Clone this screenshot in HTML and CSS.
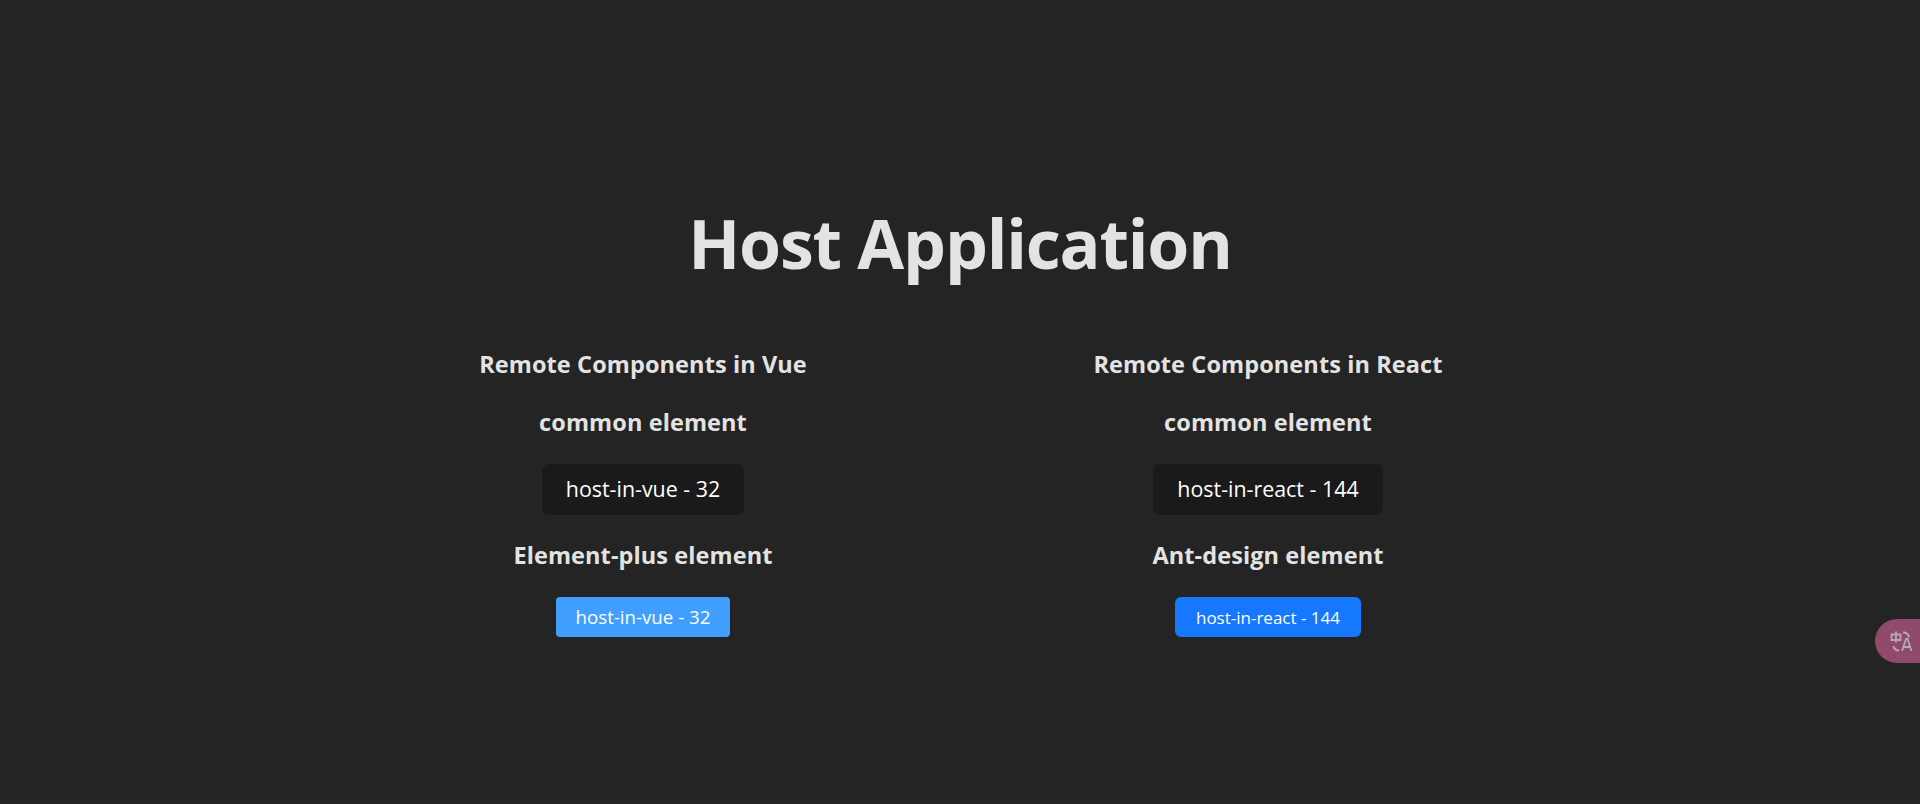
FILE: index.html
```html
<!DOCTYPE html>
<html lang="en">
<head>
<meta charset="utf-8">
<title>Host Application</title>
<link rel="stylesheet" href="styles.css">
</head>
<body>
<main class="app">
  <h1 class="title">Host Application</h1>
  <div class="columns">
    <section class="column">
      <h2 class="heading">Remote Components in Vue</h2>
      <h2 class="heading">common element</h2>
      <button class="btn-common btn-vue">host-in-vue - 32</button>
      <h2 class="heading">Element-plus element</h2>
      <button class="btn-lib btn-element">host-in-vue - 32</button>
    </section>
    <section class="column">
      <h2 class="heading">Remote Components in React</h2>
      <h2 class="heading">common element</h2>
      <button class="btn-common btn-react">host-in-react - 144</button>
      <h2 class="heading">Ant-design element</h2>
      <button class="btn-lib btn-ant">host-in-react - 144</button>
    </section>
  </div>
</main>
<div class="translate-pill">
  <svg class="translate-icon" viewBox="0 0 24 24" width="24" height="24" fill="none" stroke="#b8a9b2" stroke-width="1.8">
    <path d="M1.500 5.500h9v5.500h-9zM6 2.500v11"/>
    <path d="M13 3.500c3 0 5.500 1.500 6 5M9 21.500c-3 0-5-1.500-5.500-4.500"/>
    <path d="M12 22l4-12h1.500l4 12M14 18h6"/>
  </svg>
</div>
</body>
</html>
```

FILE: styles.css
```css
* { box-sizing: border-box; }
html, body { margin: 0; height: 100%; }
body {
  background: #242424;
  color: #e3e3e3;
  font-family: "Open Sans", "Noto Sans", sans-serif;
  overflow: hidden;
}
.app { padding-top: 198px; text-align: center; }
.title {
  margin: 0 0 60px;
  font-size: 68px;
  letter-spacing: -1.2px;
  line-height: 90px;
  font-weight: 700;
}
.columns {
  display: grid;
  grid-template-columns: 625px 625px;
  justify-content: center;
  padding-right: 9px;
}
.column { display: flex; flex-direction: column; align-items: center; }
.heading {
  margin: 0;
  font-size: 23.5px;
  letter-spacing: 0.1px;
  line-height: 32px;
  font-weight: 700;
}
.heading + .heading { margin-top: 26px; }
.btn-common {
  margin: 26px 0 24px;
  height: 51px;
  padding: 0 24px 2px;
  border: 0;
  border-radius: 8px;
  background: #1a1a1a;
  color: #fff;
  font: 400 21.400px "Open Sans", sans-serif;
}
.btn-lib {
  margin-top: 26px;
  height: 40px;
  padding: 0 19.500px 2px;
  border: 0;
  color: #fff;
  font: 400 18.700px "Open Sans", sans-serif;
}
.btn-element { background: #409eff; border-radius: 4px; }
.btn-ant { background: #1677ff; border-radius: 6px; font-size: 17px; padding: 0 20.500px; }
.translate-pill {
  position: fixed;
  right: 0;
  top: 619px;
  width: 45px;
  height: 44px;
  border-radius: 22px 0 0 22px;
  background: #8f4a6c;
  display: flex;
  align-items: center;
  padding-left: 15px;
}
.translate-icon { display: block; flex: none; }
```
